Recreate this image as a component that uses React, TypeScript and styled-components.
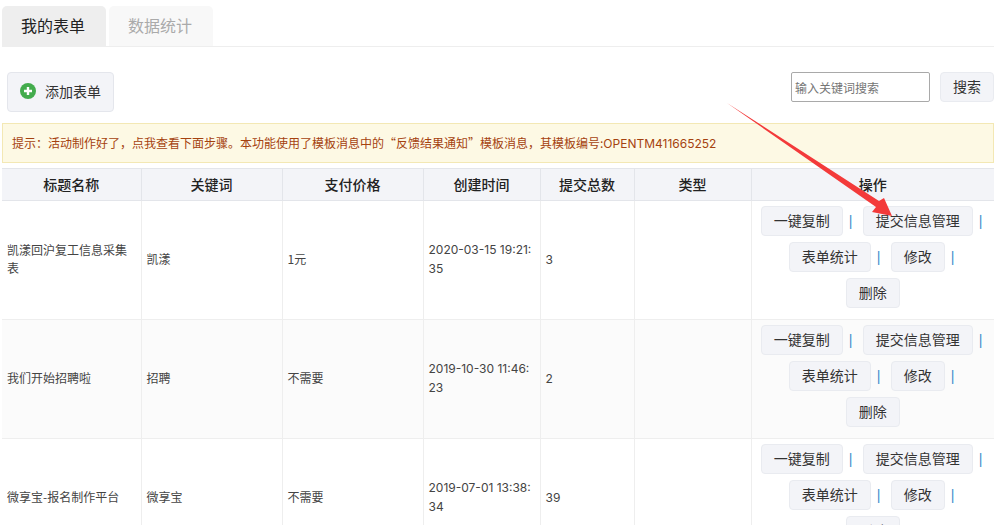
import React from "react";
import styled, { createGlobalStyle } from "styled-components";

const Global = createGlobalStyle`
  html, body { margin: 0; padding: 0; background: #fff; }
  body { font-family: "Noto Sans CJK SC", "Noto Sans", sans-serif; color: #333; font-size: 12px; }
  * { box-sizing: border-box; }
`;
const Page = styled.div`
  position: relative;
  width: 997px;
  height: 525px;
  overflow: hidden;
  padding: 6px 3px 0 2px;
`;
const TabBar = styled.div`
  display: flex;
  gap: 3px;
  height: 41px;
  border-bottom: 1px solid #eee;
`;
const Tab = styled.div<{ $active?: boolean }>`
  width: 104px;
  height: 40px;
  padding: 0 2px 3px 0;
  display: flex;
  align-items: center;
  justify-content: center;
  font-size: 16px;
  border-radius: 5px 5px 0 0;
  background: ${(p) => (p.$active ? "#eeeeee" : "#f8f8f8")};
  color: ${(p) => (p.$active ? "#222" : "#aaa")};
`;
const Toolbar = styled.div`
  display: flex;
  justify-content: space-between;
  align-items: flex-start;
  margin-top: 25px;
  padding: 0 0 0 5px;
`;
const AddButton = styled.button`
  width: 107px;
  height: 40px;
  display: flex;
  align-items: center;
  gap: 9px;
  padding: 0 0 2px 12px;
  font: inherit;
  font-size: 14px;
  line-height: 1;
  color: #333;
  background: #f3f4f8;
  border: 1px solid #e4e6ec;
  border-radius: 4px;
`;
const SearchForm = styled.div`
  display: flex;
  gap: 10px;
`;
const SearchInput = styled.input`
  width: 139px;
  height: 30px;
  padding: 0 3px;
  font: inherit;
  font-size: 12px;
  border: 1px solid #a9a9a9;
  border-radius: 2px;
  background: #fff;
  &::placeholder { color: #757575; opacity: 1; }
`;
const SearchButton = styled.button`
  width: 54px;
  height: 30px;
  padding: 0 0 2px;
  font: inherit;
  font-size: 14px;
  line-height: 1;
  color: #333;
  background: #f3f4f8;
  border: 1px solid #e9ebf0;
  border-radius: 4px;
`;
const Alert = styled.div`
  height: 40px;
  margin-top: 11px;
  padding: 0 9px 2px;
  display: flex;
  align-items: center;
  font-size: 12px;
  color: #a5420f;
  background: #fdf9e4;
  border: 1px solid #f3e8b4;
`;
const Latin = styled.span`
  font-family: Inter, "Noto Sans", sans-serif;
`;
const AlertText = styled.span`
  white-space: nowrap;
`;
const Table = styled.table`
  width: 992px;
  margin-top: 5px;
  table-layout: fixed;
  border-collapse: collapse;
`;
const Th = styled.th`
  height: 32px;
  padding: 0 0 2px;
  font-size: 14px;
  font-weight: 500;
  color: #222;
  text-align: center;
  background: #f3f4f8;
  border: 1px solid #e3e5ea;
  border-width: 1px 0 1px 1px;
  &:first-child { border-left: 0; }
`;
const Row = styled.tr`
  &:nth-child(even) { background: #fbfbfb; }
`;
const Td = styled.td`
  padding: 4px 5px 6px;
  font-size: 12px;
  line-height: 18px;
  color: #444;
  word-break: break-all;
  border: 1px solid #eeeeee;
  border-width: 1px 0 1px 1px;
  &:first-child { border-left: 0; }
`;
const ActionCell = styled(Td)`
  padding: 5px 0 5px;
`;
const ActionLine = styled.div`
  height: 36px;
  display: flex;
  justify-content: center;
  align-items: flex-start;
`;
const ActionButton = styled.button<{ $w: number }>`
  width: ${(p) => p.$w}px;
  height: 30px;
  padding: 0 0 2px;
  font: inherit;
  font-size: 14px;
  line-height: 1;
  color: #333;
  background: #f3f4f8;
  border: 1px solid #e9ebf0;
  border-radius: 4px;
`;
const Sep = styled.span`
  width: 20px;
  height: 30px;
  padding-left: 6px;
  line-height: 30px;
  font-size: 14px;
  font-family: "Liberation Sans", sans-serif;
  color: #3c8dcc;
  &:last-child { width: 12px; }
`;
const ArrowOverlay = styled.svg`
  position: absolute;
  left: 0;
  top: 0;
  pointer-events: none;
`;

function PlusIcon() {
  return (
    <svg width="16" height="16" viewBox="0 0 16 16" aria-hidden="true">
      <circle cx="8" cy="8" r="8" fill="#43ac4d" />
      <path d="M8 4v8M4 8h8" stroke="#fff" strokeWidth="2.4" />
    </svg>
  );
}

const columns = [
  { label: "标题名称", width: 139 },
  { label: "关键词", width: 141 },
  { label: "支付价格", width: 141 },
  { label: "创建时间", width: 117 },
  { label: "提交总数", width: 94 },
  { label: "类型", width: 117 },
  { label: "操作", width: 243 },
];

const rows = [
  { title: "凯漾回沪复工信息采集表", keyword: "凯漾", price: "1元", time: "2020-03-15 19:21:35", total: "3" },
  { title: "我们开始招聘啦", keyword: "招聘", price: "不需要", time: "2019-10-30 11:46:23", total: "2" },
  { title: "微享宝-报名制作平台", keyword: "微享宝", price: "不需要", time: "2019-07-01 13:38:34", total: "39" },
];

export default function App() {
  return (
    <Page>
      <Global />
      <TabBar>
        <Tab $active>我的表单</Tab>
        <Tab>数据统计</Tab>
      </TabBar>
      <Toolbar>
        <AddButton>
          <PlusIcon />
          添加表单
        </AddButton>
        <SearchForm>
          <SearchInput placeholder="输入关键词搜索" />
          <SearchButton>搜索</SearchButton>
        </SearchForm>
      </Toolbar>
      <Alert>
        <AlertText>
          提示：活动制作好了，点我查看下面步骤。本功能使用了模板消息中的“反馈结果通知”模板消息，其模板编号:
          <Latin>OPENTM411665252</Latin>
        </AlertText>
      </Alert>
      <Table>
        <colgroup>
          {columns.map((c) => (
            <col key={c.label} width={c.width} />
          ))}
        </colgroup>
        <thead>
          <tr>
            {columns.map((c) => (
              <Th key={c.label}>{c.label}</Th>
            ))}
          </tr>
        </thead>
        <tbody>
          {rows.map((r) => (
            <Row key={r.title}>
              <Td>{r.title}</Td>
              <Td>{r.keyword}</Td>
              <Td>{r.price}</Td>
              <Td><Latin>{r.time}</Latin></Td>
              <Td><Latin>{r.total}</Latin></Td>
              <Td />
              <ActionCell>
                <ActionLine>
                  <ActionButton $w={82}>一键复制</ActionButton>
                  <Sep>|</Sep>
                  <ActionButton $w={110}>提交信息管理</ActionButton>
                  <Sep>|</Sep>
                </ActionLine>
                <ActionLine>
                  <ActionButton $w={82}>表单统计</ActionButton>
                  <Sep>|</Sep>
                  <ActionButton $w={54}>修改</ActionButton>
                  <Sep>|</Sep>
                </ActionLine>
                <ActionLine>
                  <ActionButton $w={54}>删除</ActionButton>
                </ActionLine>
              </ActionCell>
            </Row>
          ))}
        </tbody>
      </Table>
      <ArrowOverlay width="997" height="525" viewBox="0 0 997 525" aria-hidden="true">
        <polygon points="727,103 879,201 884,198 892,216 872,212 876,207" fill="#f33a3a" />
      </ArrowOverlay>
    </Page>
  );
}
